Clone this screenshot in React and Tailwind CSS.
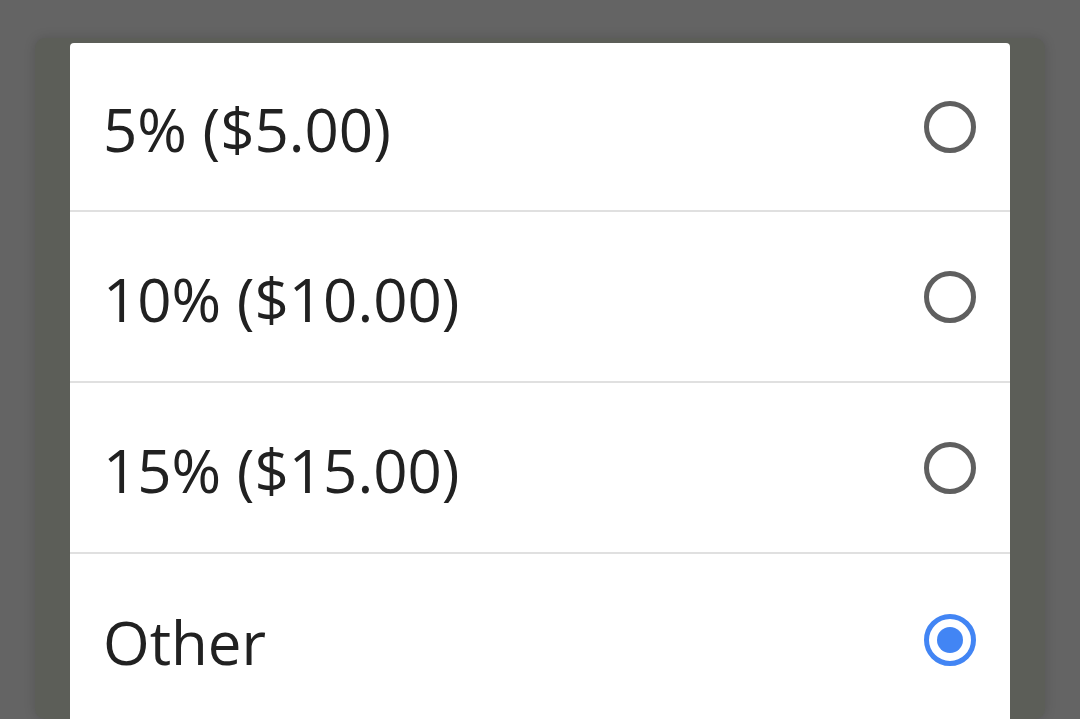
const options = [
  { label: "5% ($5.00)", selected: false },
  { label: "10% ($10.00)", selected: false },
  { label: "15% ($15.00)", selected: false },
  { label: "Other", selected: true },
];

function Radio({ selected }) {
  if (selected) {
    return (
      <div className="flex h-[52px] w-[52px] items-center justify-center rounded-full border-[5px] border-[#4285f4]">
        <div className="h-[26px] w-[26px] rounded-full bg-[#4285f4]" />
      </div>
    );
  }
  return <div className="h-[52px] w-[52px] rounded-full border-[5px] border-[#5f5f5f]" />;
}

export default function App() {
  return (
    <div className="h-[719px] overflow-hidden bg-[#646464] px-[35px] pt-[38px] font-['Open_Sans',sans-serif]">
      <div className="h-full rounded-[10px] bg-[#5c5e58] px-[35px] pt-[5px] shadow-[0_0_12px_rgba(0,0,0,0.15)]">
        <div className="divide-y-2 divide-[#e0e0e0] rounded-t-[4px] bg-white">
          {options.map((o) => (
            <div key={o.label} className="flex h-[171px] items-center justify-between pl-[33px] pr-[34px] first:h-[169px]">
              <span className="pt-[4px] text-[60px] leading-none text-[#212121]">{o.label}</span>
              <Radio selected={o.selected} />
            </div>
          ))}
        </div>
      </div>
    </div>
  );
}
